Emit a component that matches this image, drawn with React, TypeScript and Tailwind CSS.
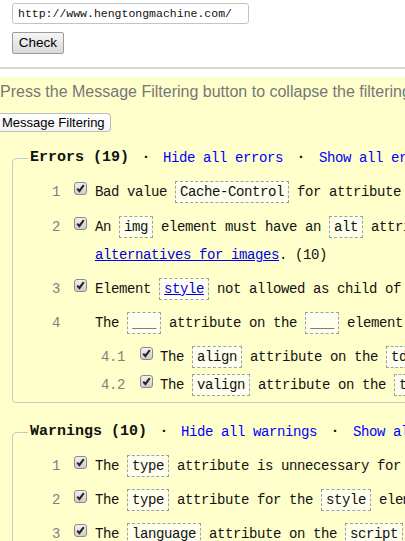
import { ReactNode } from "react";

const mono = "font-['Liberation_Mono',monospace]";

function Code({ children }: { children: ReactNode }) {
  return (
    <span className="inline-block border border-dashed border-[#a0a0a0] bg-[#ffffee] px-[4px] py-[1px] leading-[18px]">
      {children}
    </span>
  );
}

function Box() {
  return (
    <span className="mt-[4px] flex h-[13px] w-[13px] shrink-0 items-center justify-center rounded-[3px] border border-[#8a8a8a] bg-gradient-to-b from-[#f2f2f2] to-[#cdcdcd]">
      <svg width="11" height="11" viewBox="0 0 11 11">
        <path d="M2.2 5.6 L4.4 8 L8.8 2.2" fill="none" stroke="#262626" strokeWidth="2.1" />
      </svg>
    </span>
  );
}

function Row({
  n,
  check = true,
  sub = false,
  children,
}: {
  n: string;
  check?: boolean;
  sub?: boolean;
  children: ReactNode;
}) {
  return (
    <div className="flex items-start">
      <span className={`${sub ? "w-[30px]" : "w-[40px]"} shrink-0 text-right leading-[28px] text-[#808080]`}>{n}</span>
      <span className={`${sub ? "ml-[15px]" : "ml-[14px]"} flex w-[13px] shrink-0`}>{check && <Box />}</span>
      <div className={`${sub ? "ml-[7px]" : "ml-[8px]"} whitespace-nowrap leading-[28px]`}>{children}</div>
    </div>
  );
}

function Legend({ title, kind }: { title: string; kind: string }) {
  return (
    <legend className="ml-[8px] px-[2px] leading-[20px]">
      <span className="flex items-center whitespace-nowrap">
        <span className="text-[15px] font-bold tracking-normal text-[#111]">{title}</span>
        <span className="w-[34px] text-center text-[15px] font-bold tracking-normal">·</span>
        <span className="text-[#0000ff]">Hide all {kind}</span>
        <span className="w-[36px] text-center text-[15px] font-bold tracking-normal">·</span>
        <span className="text-[#0000ff]">Show all {kind}</span>
      </span>
    </legend>
  );
}

export default function App() {
  return (
    <div className="h-[541px] w-[405px] overflow-hidden bg-white">
      <div className="w-[1400px] pt-[3px]">
        <div className="ml-[12px] flex h-[21px] w-[237px] items-center rounded-[3px] border border-[#c4c4c4] px-[5px]">
          <span className={`${mono} text-[11.5px] text-[#111]`}>http://www.hengtongmachine.com/</span>
        </div>
        <button className="ml-[12px] mt-[8px] flex h-[22px] w-[52px] items-center justify-center rounded-[2px] border border-[#9a9a9a] bg-gradient-to-b from-[#f6f6f6] to-[#dadada] font-['Liberation_Sans',Arial,sans-serif] text-[13.5px] text-black">
          Check
        </button>
        <div className="mt-[13px] h-[2px] bg-[#d4d4d4]" />

        <div className={`mt-[8px] bg-[#ffffcc] pb-[40px] pt-[6px] ${mono} text-[14px] tracking-[-0.4px] text-[#111]`}>
          <p className="font-['Liberation_Sans',Arial,sans-serif] text-[16px] leading-[18px] tracking-normal text-[#777]">
            Press the Message Filtering button to collapse the filtering options and error/warning/message list.
          </p>
          <button className="mt-[12px] flex h-[19px] w-[111px] items-center rounded-r-[4px] border border-l-0 border-[#bdbdbd] bg-gradient-to-b from-white to-[#f4f4f4] pl-[2px] font-['Liberation_Sans',Arial,sans-serif] text-[13px] tracking-normal text-black">
            Message Filtering
          </button>

          <fieldset className="ml-[12px] mt-[16px] w-[1300px] rounded-[4px] border border-[#c8c8c8] pb-[3px] pl-[7px] pt-[10px]">
            <Legend title="Errors (19)" kind="errors" />
            <div className="flex flex-col gap-[6px]">
              <div className="mb-px">
                <Row n="1">
                  Bad value <Code>Cache-Control</Code> for attribute <Code>http-equiv</Code> on element <Code>meta</Code>. (2)
                </Row>
              </div>
              <Row n="2">
                An <Code>img</Code> element must have an <Code>alt</Code> attribute, except under certain conditions. For details, consult guidance on providing text
                <br />
                <a className="text-[#0000ee] underline">alternatives for images</a>. (10)
              </Row>
              <Row n="3">
                Element{" "}
                <Code>
                  <a className="text-[#0000ee] underline">style</a>
                </Code>{" "}
                not allowed as child of element <Code>body</Code> in this context.
              </Row>
              <div>
                <Row n="4" check={false}>
                  The <Code>___</Code> attribute on the <Code>___</Code> element is obsolete. Use CSS instead.
                </Row>
                <div className="ml-[75px] mt-[6px]">
                  <Row n="4.1" sub>
                    The <Code>align</Code> attribute on the <Code>td</Code> element is obsolete. Use CSS instead. (4)
                  </Row>
                  <Row n="4.2" sub>
                    The <Code>valign</Code> attribute on the <Code>td</Code> element is obsolete. Use CSS instead. (2)
                  </Row>
                </div>
              </div>
            </div>
          </fieldset>

          <fieldset className="ml-[12px] mt-[19px] w-[1300px] rounded-[4px] border border-[#c8c8c8] pb-[3px] pl-[7px] pt-[10px]">
            <Legend title="Warnings (10)" kind="warnings" />
            <div className="flex flex-col gap-[6px]">
              <Row n="1">
                The <Code>type</Code> attribute is unnecessary for JavaScript resources. (3)
              </Row>
              <Row n="2">
                The <Code>type</Code> attribute for the <Code>style</Code> element is not needed and should be omitted.
              </Row>
              <Row n="3">
                The <Code>language</Code> attribute on the <Code>script</Code> element is obsolete.
              </Row>
            </div>
          </fieldset>
        </div>
      </div>
    </div>
  );
}
